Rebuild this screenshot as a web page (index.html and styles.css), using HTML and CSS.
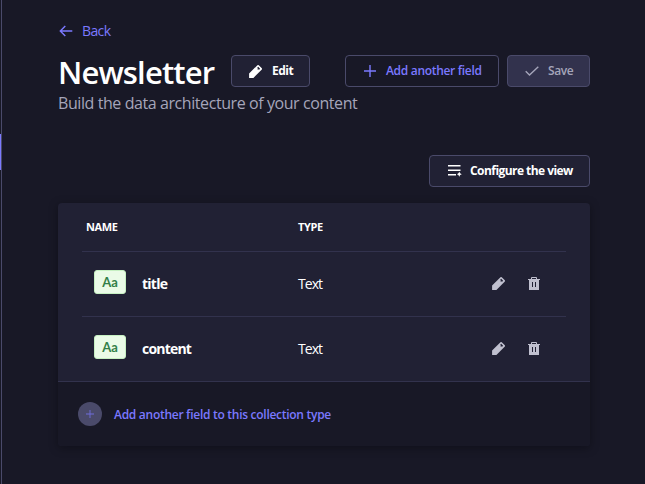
FILE: index.html
```html
<!DOCTYPE html>
<html lang="en">
<head>
<meta charset="utf-8">
<title>Newsletter</title>
<link rel="stylesheet" href="styles.css">
</head>
<body>
<svg class="defs" aria-hidden="true">
  <symbol id="pencil" viewBox="0 0 13 13"><path fill-rule="evenodd" d="M8.200.4a1.300 1.300 0 0 1 1.800 0l2.600 2.600a1.300 1.300 0 0 1 0 1.800L4.400 12.900H.1V8.600zM9.200 1.800 8.200 2.800l.6.600-.4 1 1.300.2.400.2 1-1z"/></symbol>
  <symbol id="trash" viewBox="0 0 12 13"><path fill-rule="evenodd" d="M3 2V1q0-1 1-1h4q1 0 1 1v1h3v1h-1V13H1V3H0V2zM4 2h4V1H4zM4 5v5h1V5zM7 5v5h1V5z"/></symbol>
  <symbol id="plus" viewBox="0 0 12 12"><path d="M5.300 0h1.400v5.300H12v1.400H6.700V12H5.300V6.700H0V5.300h5.300z"/></symbol>
</svg>
<div class="app">
  <aside class="rail"><span class="rail-active"></span></aside>
  <main class="main">
    <a class="back"><svg class="arrow" viewBox="0 0 14 12"><path d="M13.300 6H1.500M6.300 1 1.300 6l5 5"/></svg><span class="t-back">Back</span></a>
    <header class="header">
      <h1>Newsletter</h1>
      <button class="btn edit"><svg class="i13"><use href="#pencil"/></svg><span class="t-edit">Edit</span></button>
      <button class="btn add"><svg class="i12"><use href="#plus"/></svg><span class="t-add">Add another field</span></button>
      <button class="btn save"><svg class="check" viewBox="0 0 14 10"><path d="M.7 5.300 4.500 9 13.300.7"/></svg><span class="t-save">Save</span></button>
    </header>
    <p class="subtitle"><span class="t-sub">Build the data architecture of your content</span></p>
    <div class="toolbar">
      <button class="btn configure"><svg class="list" viewBox="0 0 14 12"><path d="M0 0h12.500v1.500H0zM0 4.500h12.500V6H0zM0 9h8v1.500H0zM11.300 6.800l.8 1.500 1.700.9-1.700.9-.8 1.700-.9-1.700-1.500-.9 1.500-.9z"/></svg><span class="t-conf">Configure the view</span></button>
    </div>
    <section class="card">
      <div class="fields">
        <div class="thead"><span class="t-name">NAME</span><span class="t-type">TYPE</span></div>
        <div class="row">
          <span class="badge">Aa</span><span class="name"><b class="t-title">title</b></span><span class="type">Text</span>
          <svg class="i13"><use href="#pencil"/></svg><svg class="trash"><use href="#trash"/></svg>
        </div>
        <div class="row">
          <span class="badge">Aa</span><span class="name"><b class="t-content">content</b></span><span class="type">Text</span>
          <svg class="i13"><use href="#pencil"/></svg><svg class="trash"><use href="#trash"/></svg>
        </div>
      </div>
      <footer class="footer"><span class="circle"><svg class="i8"><use href="#plus"/></svg></span><span class="t-foot">Add another field to this collection type</span></footer>
    </section>
  </main>
</div>
</body>
</html>
```

FILE: styles.css
```css
* { box-sizing: border-box; }
body { margin: 0; background: #181826; color: #fff; font-family: "Segoe UI", "Open Sans", "Noto Sans", sans-serif; }
.defs { position: absolute; width: 0; height: 0; }
svg { flex: none; fill: currentColor; }
span, b, h1 { white-space: nowrap; }
.app { display: flex; height: 484px; overflow: hidden; }
.rail { width: 2px; border-right: 1px solid #4a4a6a; padding-top: 134px; }
.rail-active { display: block; width: 1px; height: 36px; background: #7b79ff; }
.main { width: 532px; margin-left: 56px; padding-top: 20px; }
.back { display: flex; align-items: center; height: 22px; color: #7b79ff; font-size: 14px; line-height: 22px; }
.arrow { width: 14px; height: 12px; margin: 0 9px 0 1px; fill: none; stroke: currentColor; stroke-width: 1.4; }
.t-back { letter-spacing: -.6px; }
.header { display: flex; align-items: center; height: 40px; margin-top: 9px; }
h1 { width: 157px; margin: 2px 16px 0 0; font-size: 31px; line-height: 40px; font-weight: 600; letter-spacing: -.85px; }
.btn { display: flex; align-items: center; height: 32px; padding: 0 0 0 17px; border: 1px solid #4a4a6a; border-radius: 4px; background: #212134; color: #fff; font: 700 12px/16px "Segoe UI", "Open Sans", "Noto Sans", sans-serif; letter-spacing: -.55px; }
.edit { width: 79px; }
.t-edit { letter-spacing: -.5px; }
.edit svg { margin-right: 10px; }
.i13 { width: 13px; height: 13px; }
.i12 { width: 12px; height: 12px; }
.i8 { width: 8px; height: 8px; }
.add { width: 154px; margin-left: auto; background: #181826; color: #7b79ff; font-weight: 600; letter-spacing: -.31px; }
.add svg { margin: 0 10px 0 1px; }
.save { width: 83px; margin-left: 8px; background: #32324d; color: #a5a5ba; font-weight: 600; letter-spacing: -.4px; }
.check { width: 14px; height: 10px; margin-right: 9px; fill: none; stroke: currentColor; stroke-width: 1.4; }
.subtitle { margin: 0; height: 24px; font-size: 16px; line-height: 24px; color: #a5a5ba; letter-spacing: -.42px; }
.toolbar { display: flex; justify-content: flex-end; margin-top: 40px; }
.configure { width: 161px; }
.list { width: 14px; height: 12px; margin: 0 8px 0 1px; }
.card { height: 243px; margin-top: 16px; border-radius: 4px; background: #212134; box-shadow: 0 2px 10px rgba(3, 3, 5, .35); overflow: hidden; }
.fields { padding: 0 24px; height: 178px; }
.thead { display: flex; align-items: center; height: 48px; padding: 0 0 2px 4px; font-size: 11px; font-weight: 700; letter-spacing: -.35px; }
.t-name { width: 212px; }
.row { display: flex; align-items: center; height: 65px; border-top: 1px solid #32324d; padding-left: 12px; font-size: 14px; line-height: 20px; color: #fff; }
.row svg { color: #c0c0cf; margin-bottom: 1px; }
.row .i13 { margin-right: 23px; }
.trash { width: 12px; height: 13px; }
.badge { width: 32px; height: 24px; margin: 0 16px 4px 0; border: 1px solid #c6f0c2; border-radius: 3px; background: #eafbe7; color: #328048; font: 700 13px/22px Lato, sans-serif; text-align: center; }
.name { width: 156px; }
.name b { font-weight: 700; letter-spacing: -.8px; }
.name .t-title { letter-spacing: -.75px; }
.type { width: 194px; letter-spacing: -.95px; }
.footer { display: flex; align-items: center; height: 65px; padding: 0 0 0 20px; border-top: 1px solid #32324d; background: #181826; color: #7b79ff; font-size: 12px; font-weight: 600; letter-spacing: -.28px; }
.circle { display: flex; align-items: center; justify-content: center; width: 24px; height: 24px; margin-right: 12px; border-radius: 50%; background: #4a4a6a; }
.circle svg { opacity: .75; }
```
